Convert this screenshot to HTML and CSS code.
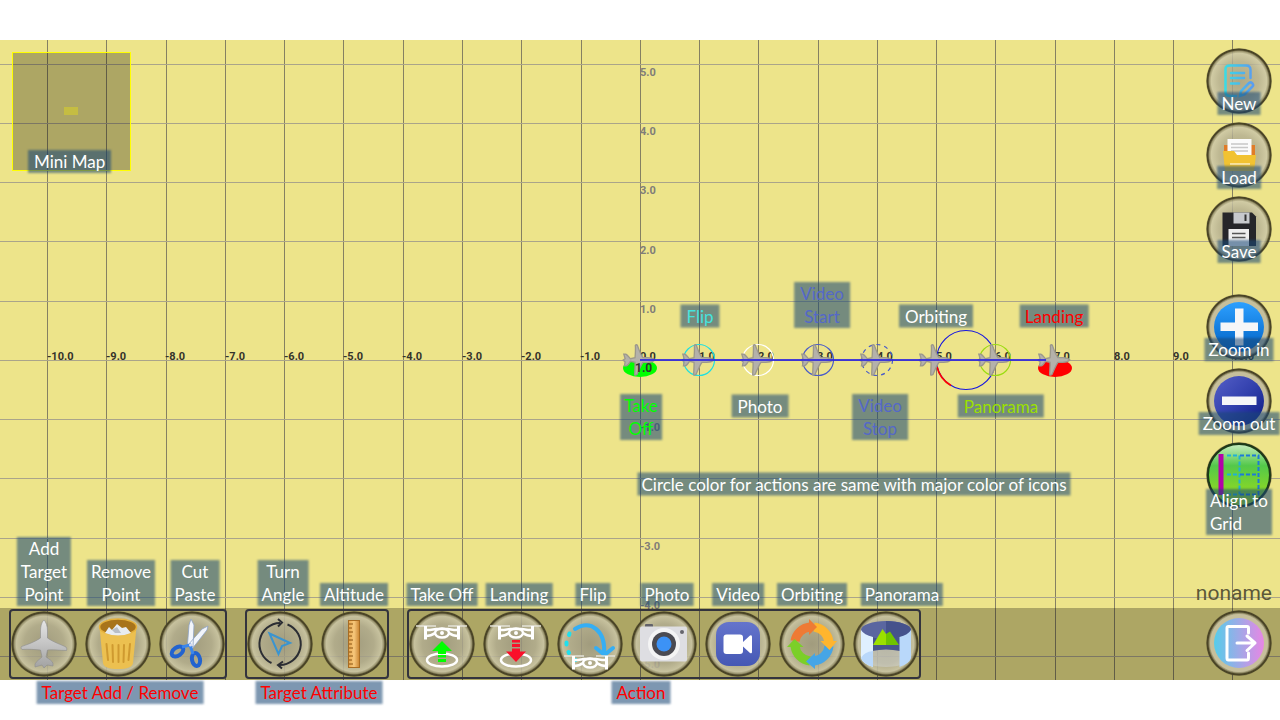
FILE: index.html
```html
<!DOCTYPE html>
<html lang="en">
<head>
<meta charset="utf-8">
<title>Flight Plan Editor</title>
<link rel="stylesheet" href="styles.css">
</head>
<body>
<svg class="defs" aria-hidden="true">
  <defs>
    <linearGradient id="metal" x1="0" y1="0" x2="0" y2="1"><stop offset="0" stop-color="#e6e6e6"/><stop offset="1" stop-color="#a2a2a2"/></linearGradient>
    <linearGradient id="wood" x1="0" y1="0" x2="1" y2="0"><stop offset="0" stop-color="#e8a850"/><stop offset=".5" stop-color="#f6c77c"/><stop offset="1" stop-color="#c98432"/></linearGradient>
    <linearGradient id="sky" x1="0" y1="0" x2="0" y2="1"><stop offset="0" stop-color="#2da0ff"/><stop offset="1" stop-color="#0061c4"/></linearGradient>
    <linearGradient id="navy" x1="0" y1="0" x2="1" y2="1"><stop offset="0" stop-color="#5560c8"/><stop offset=".5" stop-color="#3240ad"/><stop offset="1" stop-color="#0c1a80"/></linearGradient>
    <linearGradient id="candy" x1="0" y1="0" x2="1" y2="0"><stop offset="0" stop-color="#55cdea"/><stop offset="1" stop-color="#e886e4"/></linearGradient>
    <linearGradient id="aqua" gradientUnits="userSpaceOnUse" x1="19" y1="0" x2="47" y2="0"><stop offset="0" stop-color="#38dce6"/><stop offset="1" stop-color="#5a9cf0"/></linearGradient>
    <linearGradient id="lime" x1="0" y1="0" x2="0" y2="1"><stop offset="0" stop-color="#c8ecc0"/><stop offset=".35" stop-color="#53c84a"/><stop offset="1" stop-color="#a8e010"/></linearGradient>
    <linearGradient id="indigo" x1="0" y1="0" x2="0" y2="1"><stop offset="0" stop-color="#6474cc"/><stop offset="1" stop-color="#4558b4"/></linearGradient>
    <path id="plane" d="M33 9C35 11 36.500 15 36.500 20V27C42 31 51 34 55 36Q56.500 38 55.500 39.500C49 39.500 42 38.500 36.500 39L35 46C38 48 41.500 50 42 52.500V55L36 54L33 57L31 54L24 56V53C25 50.500 29 48 31 46L29.500 39C24 38.500 17 38 11 38.500Q9 37 10.500 35.500C15 34 24 31 29.500 27V20C29.500 15 31 10.500 33 9Z"/>
    <g id="drone" fill="none" stroke="#fff">
      <path stroke-width="1.500" stroke="#e4e2d8" d="M7 15H27M39 15H58"/>
      <path stroke-width="3" d="M16.500 15V28.500M49.500 15V28.500"/>
      <path stroke-width="2.500" d="M16 19H21L27 18H39L45 19H50M17 25Q22 25 26 22M49 25Q44 25 40 22"/>
      <ellipse cx="33" cy="22" rx="7" ry="4.500" stroke-width="2.500"/>
      <circle cx="33" cy="22" r="1" stroke-width="2"/>
    </g>
  </defs>
</svg>

<main class="stage">
  <svg class="map" role="img" aria-label="Flight path">
    <svg x="50%" y="50%" overflow="visible">
      <path class="grid-v" d="M-592.500-320V320M-533.500-320V320M-473.500-320V320M-414.500-320V320M-355.500-320V320M-296.500-320V320M-236.500-320V320M-177.500-320V320M-118.500-320V320M-58.500-320V320M.500-320V320M59.500-320V320M118.500-320V320M178.500-320V320M237.500-320V320M296.500-320V320M355.500-320V320M415.500-320V320M474.500-320V320M533.500-320V320M592.500-320V320"/>
      <path class="grid-h" d="M-2000-295.500H2000M-2000-236.500H2000M-2000-177.500H2000M-2000-118.500H2000M-2000-58.500H2000M-2000 .500H2000M-2000 59.500H2000M-2000 118.500H2000M-2000 178.500H2000M-2000 237.500H2000M-2000 296.500H2000"/>
      <g class="axis-y">
        <text x="0" y="-284">5.0</text><text x="0" y="-225">4.0</text><text x="0" y="-166">3.0</text><text x="0" y="-106">2.0</text><text x="0" y="-47">1.0</text>
        <text x="0" y="71">-1.0</text><text x="0" y="190">-3.0</text><text x="0" y="249">-4.0</text><text x="0" y="308">-5.0</text>
      </g>
      <ellipse cx="0" cy="8" rx="17" ry="9" fill="#0f0"/>
      <ellipse cx="415" cy="8" rx="17" ry="9" fill="#f00"/>
      <g class="axis-x">
        <text x="-593" y="0">-10.0</text><text x="-534" y="0">-9.0</text><text x="-475" y="0">-8.0</text><text x="-415" y="0">-7.0</text><text x="-356" y="0">-6.0</text><text x="-297" y="0">-5.0</text><text x="-238" y="0">-4.0</text><text x="-178" y="0">-3.0</text><text x="-119" y="0">-2.0</text><text x="-60" y="0">-1.0</text>
        <text x="0" y="0">0.0</text><text x="59" y="0">1.0</text><text x="118" y="0">2.0</text><text x="177" y="0">3.0</text><text x="237" y="0">4.0</text><text x="296" y="0">5.0</text><text x="355" y="0">6.0</text><text x="414" y="0">7.0</text><text x="474" y="0">8.0</text><text x="533" y="0">9.0</text><text x="592" y="0">10.0</text>
      </g>
      <g fill="none" stroke-width="1.200">
        <circle cx="326" cy="0" r="29.500" stroke="#1616e0"/>
        <path d="M297 7A29.500 29.500 0 0 0 311 25.500" stroke="#f00" stroke-width="1.600"/>
        <circle cx="59" cy="0" r="15.500" stroke="#1fe0e0"/>
        <circle cx="118" cy="0" r="15.500" stroke="#fff"/>
        <circle cx="178" cy="0" r="15.500" stroke="#4a5cc8"/>
        <circle cx="237" cy="0" r="15.500" stroke="#4a5cc8" stroke-dasharray="4 4"/>
        <circle cx="355" cy="0" r="15.500" stroke="#9bdc10"/>
      </g>
      <g fill="#b4b1aa" stroke="#9c988c" stroke-width="2">
        <use href="#plane" transform="translate(-3 0) rotate(90) scale(.66) translate(-33 -36)"/>
        <use href="#plane" transform="translate(56 0) rotate(90) scale(.66) translate(-33 -36)"/>
        <use href="#plane" transform="translate(115 0) rotate(90) scale(.66) translate(-33 -36)"/>
        <use href="#plane" transform="translate(175 0) rotate(90) scale(.66) translate(-33 -36)"/>
        <use href="#plane" transform="translate(234 0) rotate(90) scale(.66) translate(-33 -36)"/>
        <use href="#plane" transform="translate(293 0) rotate(90) scale(.66) translate(-33 -36)"/>
        <use href="#plane" transform="translate(352 0) rotate(90) scale(.66) translate(-33 -36)"/>
        <use href="#plane" transform="translate(412 0) rotate(90) scale(.66) translate(-33 -36)"/>
      </g>
      <path d="M0 0H406" stroke="#2a22e0" stroke-width="2" opacity=".85"/>
      <text class="altitude" x="-5" y="12">1.0</text>
    </svg>
  </svg>

  <section class="minimap" aria-label="Mini map">
    <span class="minimap-view"></span>
    <span class="tag minimap-tag">Mini Map</span>
  </section>

  <span class="tag note note-takeoff">Take<br>Off</span>
  <span class="tag note note-flip">Flip</span>
  <span class="tag note note-photo">Photo</span>
  <span class="tag note note-start">Video<br>Start</span>
  <span class="tag note note-stop">Video<br>Stop</span>
  <span class="tag note note-orbit">Orbiting</span>
  <span class="tag note note-pano">Panorama</span>
  <span class="tag note note-landing">Landing</span>
  <span class="tag note note-legend">Circle color for actions are same with major color of icons</span>

  <nav class="side" aria-label="File and view">
    <div class="side-group">
      <button class="round" type="button">
        <svg viewBox="0 0 66 66" fill="none" stroke="url(#aqua)" stroke-width="2.500" stroke-linecap="round"><path d="M30 48H24Q19.500 48 19.500 44V21Q19.500 17.500 24 17.500H40Q44.500 17.500 44.500 22V30M25 25H38M25 30H38M25 35.500H33M34 48L35 43L43 35Q45 33.500 46.500 35.500T46 39L38.500 46.500Z"/></svg>
        <span class="tag">New</span>
      </button>
      <button class="round" type="button">
        <svg viewBox="0 0 66 66"><path fill="#e07c28" d="M18 23H49V34H18Z"/><path fill="#fbfbfb" d="M21.500 17H45.500V35H21.500Z"/><path stroke="#c8c8c8" stroke-width="1.500" d="M25 22H42M25 25.500H42M25 29H42"/><path fill="#f1c232" d="M17 29H28L31 33H50L48 49H19Z"/><path stroke="#fae39a" stroke-width="2" d="M24 42H44"/></svg>
        <span class="tag">Load</span>
      </button>
      <button class="round" type="button">
        <svg viewBox="0 0 66 66"><path fill="#26262a" d="M16.500 16.500H46L50 20.500V50H16.500Z"/><path fill="#c7c9cd" d="M27.500 16.500H43.500V27.500H27.500Z"/><path fill="#333" d="M38.500 18.500H40.500V25H38.500Z"/><path fill="#eee" d="M22.500 33H43V50H22.500Z"/><path stroke="#555" stroke-width="1.300" d="M26 37.500H39.500M26 41.500H39.500"/></svg>
        <span class="tag">Save</span>
      </button>
    </div>
    <div class="side-group">
      <button class="round" type="button">
        <svg viewBox="0 0 66 66"><circle cx="33" cy="33" r="29" fill="#c6bf9b"/><circle cx="33" cy="33" r="25" fill="url(#sky)"/><path fill="#f6f6f8" d="M29 14.500H37.500V28.500H52V37H37.500V51.500H29V37H14.500V28.500H29Z"/></svg>
        <span class="tag">Zoom in</span>
      </button>
      <button class="round" type="button">
        <svg viewBox="0 0 66 66"><circle cx="33" cy="33" r="29" fill="#c6bf9b"/><circle cx="33" cy="33" r="25" fill="url(#navy)"/><path fill="#f6f6f8" d="M16 28.500H50.500V37H16Z"/></svg>
        <span class="tag">Zoom out</span>
      </button>
      <button class="round" type="button">
        <svg viewBox="0 0 66 66"><circle cx="33" cy="33" r="31" fill="url(#lime)" stroke="#1c3a18" stroke-width="2"/><path d="M15 12V53" stroke="#b400a8" stroke-width="5"/><g fill="none" stroke-width="2" stroke-dasharray="4 2"><path stroke="#1fb0d8" d="M21 13.500H33M21 32.500H33M33.500 13.500V52.500M21 52.500H33"/><path stroke="#1d7ad8" d="M34 13.500H52.500V52.500H34M34 32.500H52"/></g></svg>
        <span class="tag tag-left">Align to<br>Grid</span>
      </button>
    </div>
  </nav>

  <footer class="bar">
    <section class="tools" aria-label="Target Add / Remove">
      <button class="round" type="button">
        <svg viewBox="0 0 66 66"><use href="#plane" fill="url(#metal)" stroke="#8d8d8d" stroke-width=".6"/></svg>
        <span class="tag">Add<br>Target<br>Point</span>
      </button>
      <button class="round" type="button">
        <svg viewBox="0 0 66 66"><path fill="#ecc050" d="M14.500 16L18 52Q19 58 33 58T48 52L51.500 16Z"/><ellipse cx="33" cy="16" rx="18.500" ry="8" fill="#a8741a" stroke="#e6b23c" stroke-width="1.500"/><path fill="#e8ecf0" d="M20 22L24 16L27 19L32 13L37 17L41 16L46 22Q33 27 20 22Z"/><path fill="#b8bec6" d="M27 19L32 16L36 22H30Z"/><path fill="none" stroke="#cf9a30" stroke-width="2" stroke-linecap="round" d="M21.500 33L23 49M27.500 34L28 51M33.500 34V51M39 34L38.500 51M45 33L43.500 49"/></svg>
        <span class="tag tag-shift">Remove<br>Point</span>
      </button>
      <button class="round" type="button">
        <svg viewBox="0 0 66 66"><path fill="#f2f5fa" stroke="#8da2c4" stroke-width=".8" d="M32 8L35 14L34 36L28.500 33L30 14ZM49 15L48 19L33 38L29 34L43 18Z"/><g fill="none" stroke="#2263cf" stroke-width="4"><ellipse cx="18.500" cy="40.500" rx="6.500" ry="4" transform="rotate(-35 18.500 40.500)"/><ellipse cx="37" cy="48.500" rx="4" ry="6.500" transform="rotate(-12 37 48.500)"/></g><path fill="none" stroke="#3b86ec" stroke-width="3" d="M23 36L31 34L34 43"/><circle cx="31.500" cy="34" r="1.500" fill="#dde"/></svg>
        <span class="tag tag-shift">Cut<br>Paste</span>
      </button>
      <h2 class="tag caption">Target Add / Remove</h2>
    </section>

    <section class="tools" aria-label="Target Attribute">
      <button class="round" type="button">
        <svg viewBox="0 0 66 66" fill="none" stroke="#2b2d33" stroke-width="2"><path d="M40.500 13.500A21 21 0 0 1 32 54M24.500 52A21 21 0 0 1 33 12"/><path d="M31 8L35 11.500L31 15.500M36 50.500L31 54L35 57.500"/><path stroke="#3a94d0" d="M22.500 22.500L43 32L35 35L31.500 43Z"/></svg>
        <span class="tag tag-shift">Turn<br>Angle</span>
      </button>
      <button class="round" type="button">
        <svg viewBox="0 0 66 66"><rect x="27.500" y="9.500" width="11" height="47" fill="url(#wood)" stroke="#a86c22"/><path stroke="#8a5412" d="M28 13H32M28 17H31M28 21H32M28 25H31M28 29H32M28 33H31M28 37H32M28 41H31M28 45H32M28 49H31M28 53H32"/></svg>
        <span class="tag">Altitude</span>
      </button>
      <h2 class="tag caption">Target Attribute</h2>
    </section>

    <section class="tools" aria-label="Action">
      <button class="round" type="button">
        <svg viewBox="0 0 66 66"><ellipse cx="33" cy="49" rx="15" ry="6.500" fill="none" stroke="#fff" stroke-width="2.500"/><use href="#drone"/><path fill="#0f0" d="M33 30L43 40H37V43H29V40H23ZM29 44H37V46.500H29ZM29 48H37V51H29Z"/></svg>
        <span class="tag">Take Off</span>
      </button>
      <button class="round" type="button">
        <svg viewBox="0 0 66 66"><ellipse cx="33" cy="49" rx="15" ry="6.500" fill="none" stroke="#fff" stroke-width="2.500"/><use href="#drone"/><path fill="#fa0f2a" d="M33 51L23 40.500H29V37.500H37V40.500H43ZM29 29H37V31.500H29ZM29 33H37V36H29Z"/></svg>
        <span class="tag tag-shift">Landing</span>
      </button>
      <button class="round" type="button">
        <svg viewBox="0 0 66 66"><path fill="none" stroke="#35aef4" stroke-width="4" stroke-linecap="round" d="M18 18C34 8 49 20 47 43M39 37L47.500 44L56 37"/><path fill="none" stroke="#1fe0ee" stroke-width="4" stroke-linecap="round" d="M12.500 22.500L12 24M9.500 31.500V33.500M11.500 41L12 42M18 49H18.500"/><use href="#drone" y="30"/></svg>
        <span class="tag tag-shift">Flip</span>
      </button>
      <button class="round" type="button">
        <svg viewBox="0 0 66 66"><rect x="14" y="13" width="8" height="4" rx="1" fill="#62626a"/><rect x="9" y="15.500" width="47" height="35" rx="2" fill="#dedee2"/><circle cx="33" cy="33" r="16" fill="#f4f4f4"/><circle cx="33" cy="33" r="12" fill="#4b4b52"/><circle cx="33" cy="33" r="7.500" fill="#3c92f6"/><circle cx="51" cy="21" r="2" fill="#66666c"/></svg>
        <span class="tag tag-shift">Photo</span>
      </button>
      <button class="round" type="button">
        <svg viewBox="0 0 66 66"><rect x="11" y="11" width="44" height="44" rx="13" fill="url(#indigo)"/><rect x="18.500" y="23.500" width="19.500" height="19.500" rx="3" fill="#fff"/><path fill="#fff" d="M38 31L45 24.500Q47 23.500 47 26V41Q47 43 45 42L38 35.500Z"/></svg>
        <span class="tag">Video</span>
      </button>
      <button class="round" type="button">
        <svg viewBox="0 0 66 66"><g fill="none" stroke-width="9"><path stroke="#ffb52e" d="M35 16A17 17 0 0 1 50 31"/><path stroke="#46a5e6" d="M50 35A17 17 0 0 1 35 50"/><path stroke="#7bcf28" d="M31 50A17 17 0 0 1 16 35"/><path stroke="#ee7a34" d="M16 30A17 17 0 0 1 31 16"/></g><path fill="#ffb52e" d="M41.500 30H58L50.500 39Z"/><path fill="#46a5e6" d="M36 42V58L27 50.500Z"/><path fill="#7bcf28" d="M8 36L15.500 28L24.500 36Z"/><path fill="#ee7a34" d="M30 8L38 16L30 24Z"/></svg>
        <span class="tag">Orbiting</span>
      </button>
      <button class="round" type="button">
        <svg viewBox="0 0 66 66"><ellipse cx="33" cy="47" rx="25" ry="9" fill="#d8dce4" opacity=".4"/><path fill="#46548c" d="M19 26H47V40Q33 37 19 40Z"/><ellipse cx="33" cy="19" rx="25" ry="9" fill="#5a66a0"/><path fill="#45528c" d="M33 10A25 9 0 0 1 33 28Z"/><path fill="#9be000" d="M20 34L29.500 18L33 23V34Z"/><path fill="#6fc400" d="M33 23L37 20.500L46 34H33Z"/><path fill="#dff0ff" d="M8 19Q11 24 20 26V56Q10 53 8 47Z"/><path fill="#b9d8fa" d="M58 19Q55 24 46.500 26V56Q56 53 58 47ZM8 47Q11 41 20 40V56Q10 53 8 47Z"/></svg>
        <span class="tag tag-pano">Panorama</span>
      </button>
      <h2 class="tag caption caption-action">Action</h2>
    </section>

    <div class="session">
      <span class="filename">noname</span>
      <button class="round" type="button" aria-label="Exit">
        <svg viewBox="0 0 66 66" fill="none" stroke="#fff" stroke-width="3" stroke-linecap="round" stroke-linejoin="round"><circle cx="33" cy="33" r="29" fill="#c6bf9b" stroke="none"/><circle cx="33" cy="33" r="25" fill="url(#candy)" stroke="none"/><path d="M42.500 23V18Q42.500 16.500 41 16.500H22.500Q21 16.500 21 18V48Q21 50 22.500 50H41Q42.500 50 42.500 48V43M31 33H49M41 26L49 33L41 40.500"/></svg>
      </button>
    </div>
  </footer>
</main>
</body>
</html>
```
FILE: styles.css
```css
* { box-sizing: border-box; }

body {
  margin: 0;
  padding: 40px 0;
  background: #fff;
  font-family: Lato, "Liberation Sans", sans-serif;
  overflow: hidden;
}

.defs { position: absolute; width: 0; height: 0; }

.stage {
  position: relative;
  display: flex;
  flex-direction: column;
  justify-content: space-between;
  height: calc(100vh - 80px);
  background: #ede48a;
}

.map {
  position: absolute;
  inset: 0;
  width: 100%;
  height: 100%;
}
.grid-v { stroke: #858062; fill: none; }
.grid-h { stroke: #aaa48a; fill: none; }
.axis-x, .axis-y, .altitude { font: 700 11px Roboto, sans-serif; }
.axis-x { fill: #35332a; }
.axis-y { fill: #807d78; }
.altitude { fill: #333; font-size: 12px; }

/* Captions drawn over a soft slate backing */
.tag {
  position: absolute;
  z-index: 1;
  padding: 0 6px;
  color: #fff;
  font-size: 17px;
  font-weight: 400;
  line-height: 23px;
  text-align: center;
  white-space: nowrap;
}
.tag::before {
  content: "";
  position: absolute;
  inset: 0;
  z-index: -1;
  background: rgba(27, 72, 118, .57);
  filter: blur(1px);
}

.minimap {
  position: absolute;
  top: 12px;
  left: 12px;
  width: 119px;
  height: 119px;
  border: 1px solid #ff0;
  background: rgba(0, 0, 0, .27);
}
.minimap-view {
  position: absolute;
  top: 54px;
  left: 51px;
  width: 14px;
  height: 8px;
  background: #c5bd42;
}
.minimap-tag { left: 15px; bottom: -3px; }

.note { transform: translate(-50%, -50%); }
.note-takeoff { left: calc(50% + 1px); top: calc(50% + 57px); padding: 0 4px; color: #0f0; }
.note-flip { left: calc(50% + 60px); top: calc(50% - 44px); color: #46e2dc; }
.note-photo { left: calc(50% + 120px); top: calc(50% + 46px); }
.note-start { left: calc(50% + 182px); top: calc(50% - 55px); color: #5468c8; }
.note-stop { left: calc(50% + 240px); top: calc(50% + 57px); color: #5468c8; }
.note-orbit { left: calc(50% + 296px); top: calc(50% - 44px); }
.note-pano { left: calc(50% + 361px); top: calc(50% + 46px); color: #9be000; }
.note-landing { left: calc(50% + 414px); top: calc(50% - 44px); padding: 0 5px; color: #f00; }
.note-legend { left: calc(50% + 214px); top: calc(50% + 124px); padding: 0 4px; }

.round {
  position: relative;
  flex: none;
  width: 66px;
  height: 66px;
  padding: 0;
  border: 0;
  border-radius: 50%;
  background: radial-gradient(circle closest-side, rgba(158, 153, 132, .8) 0, rgba(178, 173, 148, .8) 60%, rgba(203, 198, 168, .85) 84%, rgba(150, 144, 110, .9) 90%, #4a4426 94%, #4a4426 97%, rgba(74, 68, 38, .3) 100%);
  font-family: inherit;
  cursor: pointer;
}
.round svg { display: block; width: 66px; height: 66px; }

.side {
  display: flex;
  flex-direction: column;
  align-self: flex-end;
  gap: 32px;
  padding: 8px 8px 0;
}
.side-group { display: flex; flex-direction: column; gap: 8px; }
.side .tag { top: 44px; left: 50%; padding: 0 4px; transform: translateX(-50%); }
.side .tag-left { top: 47px; text-align: left; }

.bar {
  position: relative;
  display: flex;
  align-items: center;
  gap: 18px;
  height: 72px;
  padding: 0 8px 0 9px;
  background: rgba(0, 0, 0, .27);
}
.tools {
  position: relative;
  display: flex;
  gap: 8px;
  border: 2px solid #33333d;
  border-radius: 4px;
}
.tools .round .tag {
  bottom: calc(100% + 5px);
  left: 50%;
  padding: 0 4px;
  transform: translateX(-50%);
}
.tools .round .tag-shift { left: calc(50% + 3px); }
.tools .round .tag-pano { left: calc(50% + 16px); }

.caption {
  top: calc(100% + 4px);
  left: calc(50% + 2px);
  margin: 0;
  padding: 0 5px;
  color: #f00;
  transform: translateX(-50%);
}
.caption-action { left: calc(50% - 23px); }

.session { position: relative; margin-left: auto; }
.filename {
  position: absolute;
  right: 0;
  bottom: calc(100% + 5px);
  color: #5c5838;
  font: 21px/24px Roboto, sans-serif;
}
```
